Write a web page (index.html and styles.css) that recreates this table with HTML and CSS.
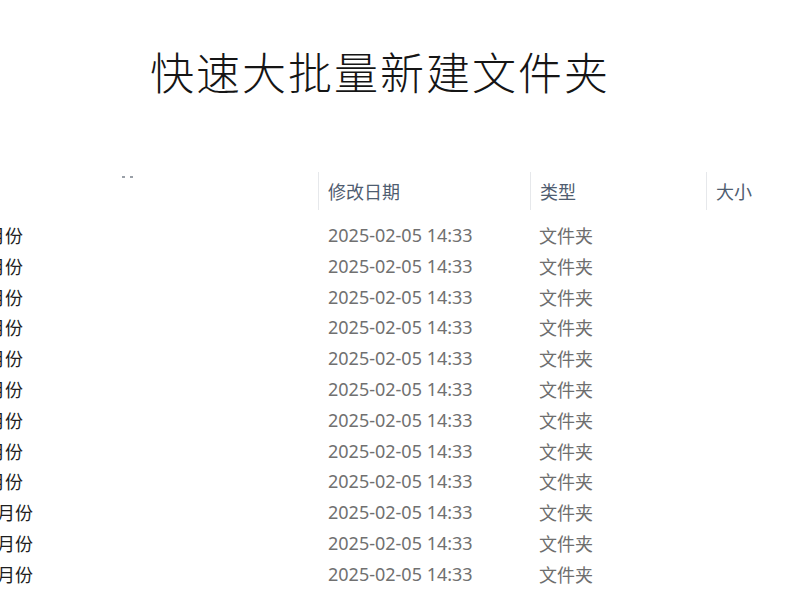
FILE: index.html
```html
<!DOCTYPE html>
<html lang="zh-CN">
<head>
<meta charset="utf-8">
<title>快速大批量新建文件夹</title>
<link rel="stylesheet" href="styles.css">
</head>
<body>
<div class="page">
  <h1 class="title">快速大批量新建文件夹</h1>
  <div class="table">
    <div class="head">
      <div class="h-name"><svg class="sort" width="12" height="4" viewBox="0 0 12 4"><rect x="0" y="1" width="3" height="2" fill="#9aa0a8"/><rect x="8" y="1" width="3" height="2" fill="#9aa0a8"/></svg></div>
      <div class="h-date">修改日期</div>
      <div class="h-type">类型</div>
      <div class="h-size">大小</div>
    </div>
    <div class="row"><div class="c-name"><span class="nm">2025年1月份</span></div><div class="c-date">2025-02-05 14:33</div><div class="c-type">文件夹</div></div>
    <div class="row"><div class="c-name"><span class="nm">2025年2月份</span></div><div class="c-date">2025-02-05 14:33</div><div class="c-type">文件夹</div></div>
    <div class="row"><div class="c-name"><span class="nm">2025年3月份</span></div><div class="c-date">2025-02-05 14:33</div><div class="c-type">文件夹</div></div>
    <div class="row"><div class="c-name"><span class="nm">2025年4月份</span></div><div class="c-date">2025-02-05 14:33</div><div class="c-type">文件夹</div></div>
    <div class="row"><div class="c-name"><span class="nm">2025年5月份</span></div><div class="c-date">2025-02-05 14:33</div><div class="c-type">文件夹</div></div>
    <div class="row"><div class="c-name"><span class="nm">2025年6月份</span></div><div class="c-date">2025-02-05 14:33</div><div class="c-type">文件夹</div></div>
    <div class="row"><div class="c-name"><span class="nm">2025年7月份</span></div><div class="c-date">2025-02-05 14:33</div><div class="c-type">文件夹</div></div>
    <div class="row"><div class="c-name"><span class="nm">2025年8月份</span></div><div class="c-date">2025-02-05 14:33</div><div class="c-type">文件夹</div></div>
    <div class="row"><div class="c-name"><span class="nm">2025年9月份</span></div><div class="c-date">2025-02-05 14:33</div><div class="c-type">文件夹</div></div>
    <div class="row"><div class="c-name"><span class="nm">2025年10月份</span></div><div class="c-date">2025-02-05 14:33</div><div class="c-type">文件夹</div></div>
    <div class="row"><div class="c-name"><span class="nm">2025年11月份</span></div><div class="c-date">2025-02-05 14:33</div><div class="c-type">文件夹</div></div>
    <div class="row"><div class="c-name"><span class="nm">2025年12月份</span></div><div class="c-date">2025-02-05 14:33</div><div class="c-type">文件夹</div></div>
  </div>
</div>
</body>
</html>
```
FILE: styles.css
```css
html, body {
  margin: 0;
  padding: 0;
  background: #ffffff;
}
.page {
  width: 800px;
  height: 600px;
  overflow: hidden;
  font-family: "Noto Sans", "Noto Sans CJK SC", sans-serif;
}
.title {
  margin: 0;
  padding: 42px 0 0 150px;
  height: 63px;
  font-family: "Noto Sans CJK SC", serif;
  font-weight: 300;
  font-size: 44px;
  line-height: 58px;
  letter-spacing: 2px;
  color: #151515;
}
.table {
  margin-top: 67px;
}
.head {
  display: flex;
  height: 38px;
  font-family: "Noto Sans CJK SC", sans-serif;
  font-size: 18px;
  line-height: 38px;
  color: #4f5d70;
  margin-bottom: 10px;
}
.h-name {
  width: 318px;
  display: flex;
  justify-content: center;
  align-items: flex-start;
}
.sort {
  margin: 3px 0 0 -63px;
}
.h-date, .h-type, .h-size {
  border-left: 1px solid #e6e8eb;
  padding-left: 9px;
  box-sizing: border-box;
}
.h-date { width: 212px; }
.h-type { width: 176px; }
.h-size { flex: 1; }
.row {
  display: flex;
  height: 30.8px;
  line-height: 30.8px;
  font-size: 18px;
}
.c-name {
  width: 318px;
  overflow: hidden;
  white-space: nowrap;
  font-family: "Noto Sans CJK SC", sans-serif;
  color: #1e1e1e;
}
.nm {
  display: inline-block;
  margin-left: -81px;
}
.c-date {
  width: 212px;
  padding-left: 10px;
  box-sizing: border-box;
  color: #707070;
  font-family: "Noto Sans", sans-serif;
}
.c-type {
  width: 176px;
  padding-left: 9px;
  box-sizing: border-box;
  color: #6e6e6e;
  font-family: "Noto Sans CJK SC", sans-serif;
}
```
